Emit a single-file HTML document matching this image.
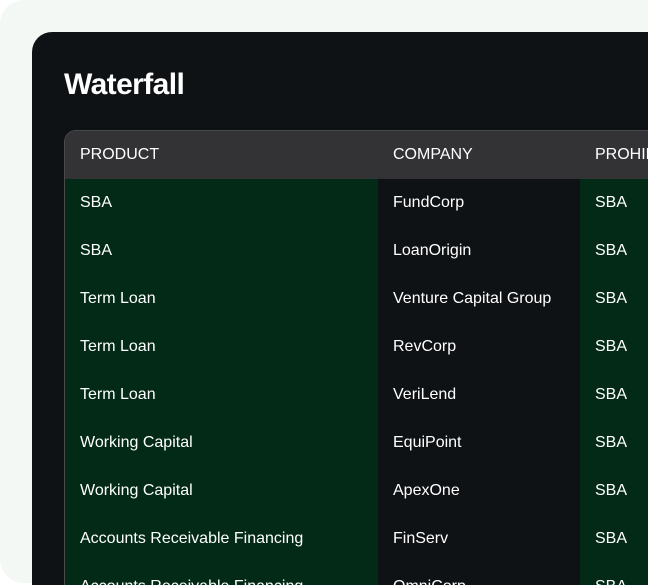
<!DOCTYPE html>
<html><head><style>
*{margin:0;padding:0;box-sizing:border-box}
html,body{width:648px;height:585px;overflow:hidden}
body{background:#fff;font-family:"Liberation Sans",sans-serif;position:relative}
.outer{position:absolute;left:0;top:0;width:648px;height:583px;background:#f3f8f4;border-radius:24px 0 0 24px}
.card{position:absolute;left:32px;top:32px;width:616px;height:553px;background:#0f1215;border-radius:20px 0 0 0;overflow:hidden}
h1{position:absolute;left:32px;top:36px;color:#fff;font-size:30px;font-weight:bold;letter-spacing:-0.6px}
.tbl{position:absolute;left:32px;top:98px;width:584px;height:455px;border:1px solid #4a4a4d;border-right:none;border-bottom:none;border-radius:12px 0 0 0;overflow:hidden}
.row{height:48px;display:flex;color:#fff;font-size:16px;line-height:48px;white-space:nowrap}
.row div{padding-left:15px;flex-shrink:0;overflow:hidden}
.c1{width:313px;background:#032a17}
.c2{width:202px;background:#0f1215}
.c3{width:69px;background:#032a17}
.hd{background:#333336}
.hd div{background:#333336}
</style></head><body>
<div class="outer"></div>
<div class="card">
<h1>Waterfall</h1>
<div class="tbl">
<div class="row hd"><div class="c1">PRODUCT</div><div class="c2">COMPANY</div><div class="c3">PROHIBITED</div></div>
<div class="row"><div class="c1">SBA</div><div class="c2">FundCorp</div><div class="c3">SBA</div></div>
<div class="row"><div class="c1">SBA</div><div class="c2">LoanOrigin</div><div class="c3">SBA</div></div>
<div class="row"><div class="c1">Term Loan</div><div class="c2">Venture Capital Group</div><div class="c3">SBA</div></div>
<div class="row"><div class="c1">Term Loan</div><div class="c2">RevCorp</div><div class="c3">SBA</div></div>
<div class="row"><div class="c1">Term Loan</div><div class="c2">VeriLend</div><div class="c3">SBA</div></div>
<div class="row"><div class="c1">Working Capital</div><div class="c2">EquiPoint</div><div class="c3">SBA</div></div>
<div class="row"><div class="c1">Working Capital</div><div class="c2">ApexOne</div><div class="c3">SBA</div></div>
<div class="row"><div class="c1">Accounts Receivable Financing</div><div class="c2">FinServ</div><div class="c3">SBA</div></div>
<div class="row"><div class="c1">Accounts Receivable Financing</div><div class="c2">OmniCorp</div><div class="c3">SBA</div></div>
</div>
</div>
</body></html>
